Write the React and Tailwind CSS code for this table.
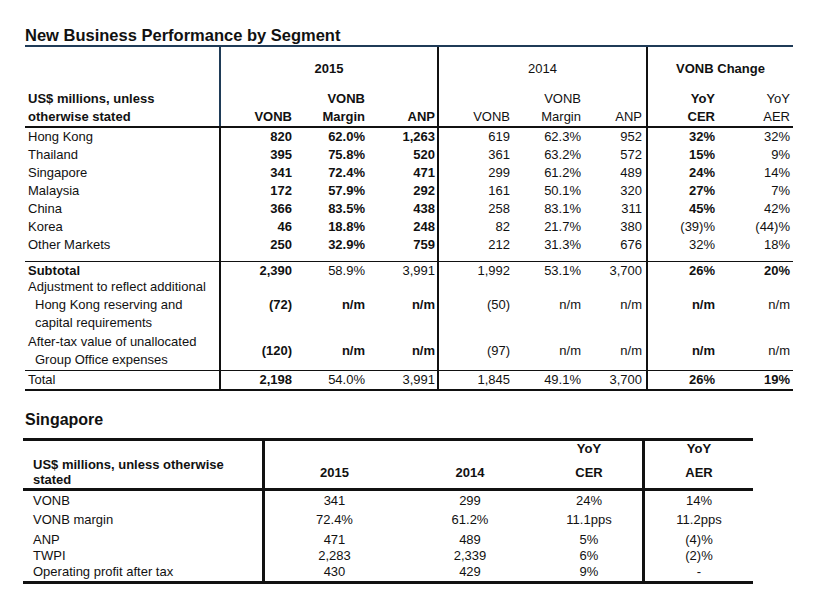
import React from 'react';

const COLS = 'grid grid-cols-[194px_76px_73px_69px_76px_71px_62px_73px_74px]';
const PR = ['', 'pr-[3px]', 'pr-[3px]', 'pr-[2px]', 'pr-[3px]', 'pr-[3px]', 'pr-[4px]', 'pr-[4px]', 'pr-[3px]'];
const DIV = [false, true, false, false, true, false, false, true, false];

const segments = [
  ['Hong Kong', '820', '62.0%', '1,263', '619', '62.3%', '952', '32%', '32%'],
  ['Thailand', '395', '75.8%', '520', '361', '63.2%', '572', '15%', '9%'],
  ['Singapore', '341', '72.4%', '471', '299', '61.2%', '489', '24%', '14%'],
  ['Malaysia', '172', '57.9%', '292', '161', '50.1%', '320', '27%', '7%'],
  ['China', '366', '83.5%', '438', '258', '83.1%', '311', '45%', '42%'],
  ['Korea', '46', '18.8%', '248', '82', '21.7%', '380', '(39)%', '(44)%', { cerLight: true }],
  ['Other Markets', '250', '32.9%', '759', '212', '31.3%', '676', '32%', '18%', { cerLight: true }],
];

// bold pattern for normal segment rows: 2015 cols + CER
const SEG_BOLD = [false, true, true, true, false, false, false, true, false];

function Row({ cells, bold = [], height, className = '', align = 'items-center' }) {
  return (
    <div className={`${COLS} ${className}`} style={height ? { height } : undefined}>
      {Array.from({ length: 9 }).map((_, i) => (
        <div
          key={i}
          className={`flex ${align} ${i === 0 ? 'pl-[3px]' : 'justify-end text-right ' + PR[i]} ${
            DIV[i] ? 'border-l-2 border-[#111]' : ''
          } ${bold[i] ? 'font-bold' : ''}`}
        >
          {cells[i]}
        </div>
      ))}
    </div>
  );
}

function SegmentTable() {
  return (
    <div className="w-[768px] text-[13px] leading-[18px] text-[#111]">
      <div className="border-t-2 border-[#1f3b57]">
        {/* header band */}
        <div className={COLS}>
          <div className="h-[43px]" />
          <div className="col-span-3 flex items-center justify-center border-l-2 border-[#1f3b57] font-bold">2015</div>
          <div className="col-span-3 flex items-center justify-center border-l-2 border-[#111]">2014</div>
          <div className="col-span-2 flex items-center justify-center border-l-2 border-[#111] font-bold">VONB Change</div>
        </div>
        <div className={`${COLS} border-b-2 border-[#111]`}>
          <div className="pl-[3px] font-bold h-[36px]">
            <div>US$ millions, unless</div>
            <div>otherwise stated</div>
          </div>
          <div className="border-l-2 border-[#1f3b57] flex items-end justify-end pr-[3px] font-bold">VONB</div>
          <div className="flex flex-col items-end pr-[3px] font-bold">
            <div>VONB</div>
            <div>Margin</div>
          </div>
          <div className="flex items-end justify-end pr-[2px] font-bold">ANP</div>
          <div className="border-l-2 border-[#111] flex items-end justify-end pr-[3px]">VONB</div>
          <div className="flex flex-col items-end pr-[3px]">
            <div>VONB</div>
            <div>Margin</div>
          </div>
          <div className="flex items-end justify-end pr-[4px]">ANP</div>
          <div className="border-l-2 border-[#111] flex flex-col items-end pr-[4px] font-bold">
            <div>YoY</div>
            <div>CER</div>
          </div>
          <div className="flex flex-col items-end pr-[3px]">
            <div>YoY</div>
            <div>AER</div>
          </div>
        </div>

        {segments.map((r) => {
          const opts = r[9] || {};
          const bold = SEG_BOLD.map((b, i) => (i === 7 && opts.cerLight ? false : b));
          return <Row key={r[0]} cells={r} bold={bold} height={18} />;
        })}
        <Row cells={[]} height={8} className="border-b border-[#111]" />

        <Row
          cells={['Subtotal', '2,390', '58.9%', '3,991', '1,992', '53.1%', '3,700', '26%', '20%']}
          bold={[true, true, false, false, false, false, false, true, true]}
          height={16}
        />
        <Row
          cells={[
            <div key="l">
              <div>Adjustment to reflect additional</div>
              <div className="pl-[7px]">Hong Kong reserving and</div>
              <div className="pl-[7px]">capital requirements</div>
            </div>,
            '(72)', 'n/m', 'n/m', '(50)', 'n/m', 'n/m', 'n/m', 'n/m',
          ]}
          bold={[false, true, true, true, false, false, false, true, false]}
          height={54}
        />
        <Row
          cells={[
            <div key="l">
              <div>After-tax value of unallocated</div>
              <div className="pl-[7px]">Group Office expenses</div>
            </div>,
            '(120)', 'n/m', 'n/m', '(97)', 'n/m', 'n/m', 'n/m', 'n/m',
          ]}
          bold={[false, true, true, true, false, false, false, true, false]}
          height={39}
          className="border-b border-[#111]"
        />
        <Row
          cells={['Total', '2,198', '54.0%', '3,991', '1,845', '49.1%', '3,700', '26%', '19%']}
          bold={[false, true, false, false, false, false, false, true, true]}
          height={20}
          className="border-b-2 border-[#111]"
        />
      </div>
    </div>
  );
}

const SG_COLS = 'grid grid-cols-[239px_142px_132px_106px_111px]';

const sgRows = [
  ['VONB', '341', '299', '24%', '14%', 19],
  ['VONB margin', '72.4%', '61.2%', '11.1pps', '11.2pps', 20],
  ['ANP', '471', '489', '5%', '(4)%', 16],
  ['TWPI', '2,283', '2,339', '6%', '(2)%', 16],
  ['Operating profit after tax', '430', '429', '9%', '-', 19],
];

function SingaporeTable() {
  return (
    <div className="w-[730px] text-[13px] text-[#111] border-t-[3px] border-b-[3px] border-[#111]">
      <div className={`${SG_COLS} h-[50px] border-b-[3px] border-[#111] font-bold`}>
        <div className="flex items-end pb-[1px] pl-[10px] leading-[15px]">
          <div>
            <div>US$ millions, unless otherwise</div>
            <div>stated</div>
          </div>
        </div>
        <div className="border-l-[3px] border-[#111] text-center pt-[24px] leading-[16px]">2015</div>
        <div className="text-center pt-[24px] leading-[16px]">2014</div>
        <div className="text-center leading-[16px]">
          <div>YoY</div>
          <div className="mt-[8px]">CER</div>
        </div>
        <div className="border-l-[3px] border-[#111] text-center leading-[16px]">
          <div>YoY</div>
          <div className="mt-[8px]">AER</div>
        </div>
      </div>
      {sgRows.map((r) => (
        <div key={r[0]} className={SG_COLS} style={{ height: r[5] }}>
          <div className="flex items-center pl-[10px]">{r[0]}</div>
          <div className="flex items-center justify-center border-l-[3px] border-[#111]">{r[1]}</div>
          <div className="flex items-center justify-center">{r[2]}</div>
          <div className="flex items-center justify-center">{r[3]}</div>
          <div className="flex items-center justify-center border-l-[3px] border-[#111]">{r[4]}</div>
        </div>
      ))}
    </div>
  );
}

export default function App() {
  return (
    <div className="w-[827px] h-[595px] bg-white overflow-hidden font-['Liberation_Sans',Arial,sans-serif]">
      <div className="pl-[25px] pt-[26px]">
        <h2 className="text-[16.5px] leading-[19px] font-bold text-[#111]">New Business Performance by Segment</h2>
        <SegmentTable />
      </div>
      <div className="pl-[23px] pt-[19px]">
        <h2 className="pl-[2px] text-[16px] leading-[19px] font-bold text-[#111]">Singapore</h2>
        <div className="pt-[9px]">
          <SingaporeTable />
        </div>
      </div>
    </div>
  );
}
